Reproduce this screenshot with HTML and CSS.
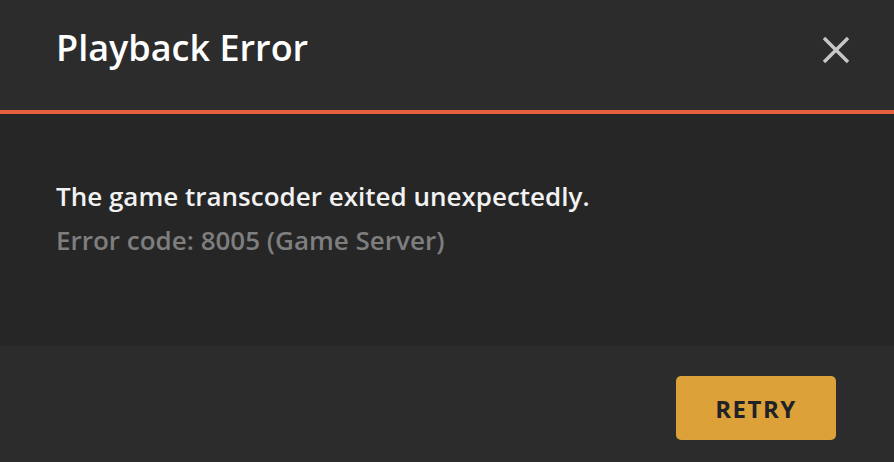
FILE: index.html
```html
<!DOCTYPE html>
<html lang="en">
<head>
<meta charset="utf-8">
<title>Playback Error</title>
<link rel="stylesheet" href="styles.css">
</head>
<body>
<div class="modal">
  <header class="modal-header">
    <h1 class="modal-title">Playback Error</h1>
    <button class="close-btn" aria-label="Close">
      <svg width="28" height="28" viewBox="0 0 28 28"><path d="M2 2 L26 26 M26 2 L2 26" stroke="#c7c7c7" stroke-width="3.4" stroke-linecap="butt"/></svg>
    </button>
  </header>
  <section class="modal-body">
    <p class="message">The game transcoder exited unexpectedly.</p>
    <p class="code">Error code: 8005 (Game Server)</p>
  </section>
  <footer class="modal-footer">
    <button class="retry-btn">RETRY</button>
  </footer>
</div>
</body>
</html>
```
FILE: styles.css
```css
html, body {
  margin: 0;
  padding: 0;
  background: #2c2c2c;
}
body {
  font-family: "Open Sans", "Noto Sans", sans-serif;
  width: 894px;
  height: 462px;
  overflow: hidden;
}
.modal {
  display: flex;
  flex-direction: column;
  height: 462px;
}
.modal-header {
  height: 110px;
  box-sizing: content-box;
  border-bottom: 4px solid #e5613e;
  background: #2c2c2c;
  display: flex;
  align-items: flex-start;
  justify-content: space-between;
  padding: 0 44px 0 56px;
}
.modal-title {
  margin: 31px 0 0;
  font-size: 36px;
  font-weight: 600;
  color: #ffffff;
  line-height: 34px;
}
.close-btn {
  background: none;
  border: 0;
  padding: 0;
  width: 28px;
  height: 28px;
  display: flex;
  margin-top: 36px;
}
.modal-body {
  background: #262626;
  height: 232px;
  padding: 64px 56px 0;
  box-sizing: border-box;
  display: flex;
  flex-direction: column;
}
.message {
  margin: 0;
  font-size: 26px;
  font-weight: 600;
  color: #f2f2f2;
  line-height: 36px;
}
.code {
  margin: 8px 0 0;
  font-size: 26px;
  font-weight: 600;
  color: #7e7e7e;
  line-height: 36px;
}
.modal-footer {
  flex: 1;
  background: #2c2c2c;
  display: flex;
  justify-content: flex-end;
  align-items: flex-start;
  padding: 30px 58px 0 0;
}
.retry-btn {
  width: 160px;
  height: 64px;
  border: 0;
  border-radius: 5px;
  background: #dca139;
  color: #1f2226;
  font-family: "Open Sans", "Noto Sans", sans-serif;
  font-size: 24px;
  font-weight: 700;
  letter-spacing: 1.5px;
  padding: 0;
}
```
